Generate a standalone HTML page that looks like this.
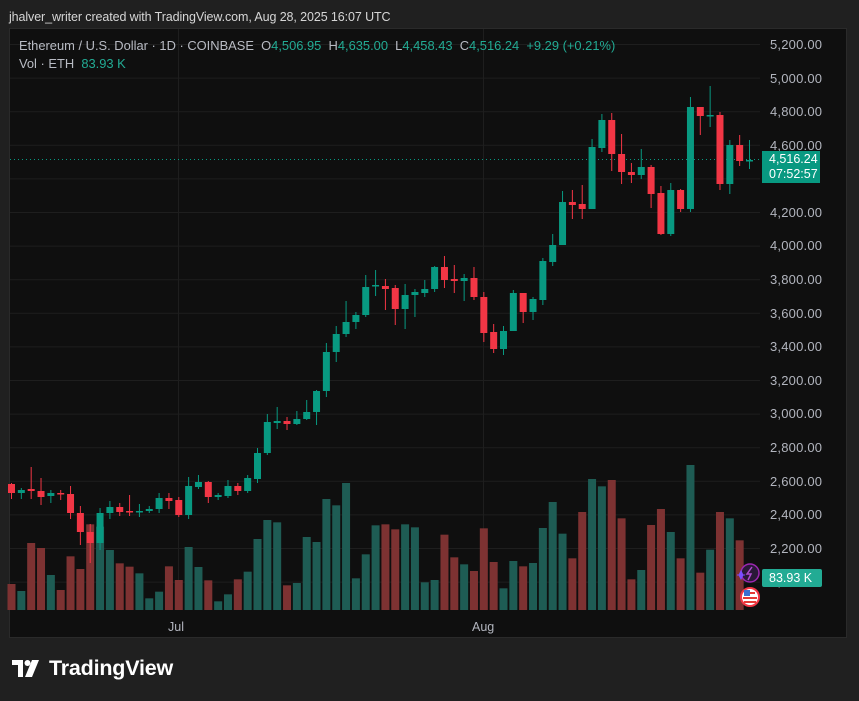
<!DOCTYPE html>
<html><head><meta charset="utf-8"><style>
html,body{margin:0;padding:0;background:#202020;width:859px;height:701px;overflow:hidden;font-family:"Liberation Sans",sans-serif}
#hdr{position:absolute;left:9px;top:10px;font-size:12.5px;color:#d6d6d6;letter-spacing:-0.1px}
#panel{position:absolute;left:9px;top:28px;width:838px;height:610px;background:#0f0f0f;border:1px solid #2a2a2a;box-sizing:border-box}
svg{position:absolute;left:0;top:0}
.leg{position:absolute;left:19px;font-size:12.9px;color:#b8bbc3;white-space:nowrap}
.leg b{font-weight:normal;color:#22ab94}
.pl{position:absolute;left:770px;font-size:13px;color:#b2b5be;letter-spacing:0.2px}
.tl{position:absolute;top:620px;font-size:12.5px;color:#b2b5be}
#badge{position:absolute;left:762px;top:151px;width:58px;height:32px;background:#089981;color:#fff;font-size:12.5px;line-height:15px;padding-left:7px;box-sizing:border-box;padding-top:1px}
#vb{position:absolute;left:762px;top:569px;width:60px;height:18px;background:#22ab94;color:#fff;font-size:12.5px;line-height:18px;padding-left:7px;box-sizing:border-box;border-radius:2px}
#logo{position:absolute;left:12px;top:656px;color:#fff;font-size:21.5px;font-weight:bold;letter-spacing:-0.2px}
</style></head><body>
<div id="hdr">jhalver_writer created with TradingView.com, Aug 28, 2025 16:07 UTC</div>
<div id="panel"></div>
<svg id="ch" width="859" height="701"></svg>
<div class="leg" style="top:38px">Ethereum / U.S. Dollar · 1D · COINBASE &nbsp;O<b>4,506.95</b> &nbsp;H<b>4,635.00</b> &nbsp;L<b>4,458.43</b> &nbsp;C<b>4,516.24</b> &nbsp;<b>+9.29 (+0.21%)</b></div>
<div class="leg" style="top:56px">Vol · ETH &nbsp;<b>83.93 K</b></div>
<div class="pl" style="top:37px">5,200.00</div>
<div class="pl" style="top:71px">5,000.00</div>
<div class="pl" style="top:104px">4,800.00</div>
<div class="pl" style="top:138px">4,600.00</div>
<div class="pl" style="top:205px">4,200.00</div>
<div class="pl" style="top:238px">4,000.00</div>
<div class="pl" style="top:272px">3,800.00</div>
<div class="pl" style="top:306px">3,600.00</div>
<div class="pl" style="top:339px">3,400.00</div>
<div class="pl" style="top:373px">3,200.00</div>
<div class="pl" style="top:406px">3,000.00</div>
<div class="pl" style="top:440px">2,800.00</div>
<div class="pl" style="top:474px">2,600.00</div>
<div class="pl" style="top:507px">2,400.00</div>
<div class="pl" style="top:541px">2,200.00</div>
<div class="pl" style="top:574px">2,000.00</div>
<div class="tl" style="left:168px">Jul</div>
<div class="tl" style="left:472px">Aug</div>
<div id="badge">4,516.24<br>07:52:57</div>
<div id="vb">83.93 K</div>
<svg width="859" height="701" style="pointer-events:none">
<circle cx="750" cy="573" r="9" fill="#2a1838" stroke="#9c27b0" stroke-width="1.5"/>
<path d="M752 567 L747 574 L751 574 L748 580" stroke="#b04bd0" stroke-width="1.5" fill="none"/>
<path d="M739 575 l2 -4 l2 4 l-2 4z M737 575 h8" fill="#7c4dff" stroke="#7c4dff" stroke-width="1"/>
<circle cx="750" cy="597" r="9" fill="#fff" stroke="#f23645" stroke-width="2"/>
<rect x="745" y="592" width="10" height="2" fill="#e53935"/><rect x="743" y="597" width="14" height="2" fill="#e53935"/><rect x="744" y="601" width="12" height="2" fill="#e53935"/>
<rect x="744" y="590" width="6" height="6" fill="#3b6fd1"/>
<g transform="translate(12,660)"><path d="M0 0 H11 V17 H6 V5 H0Z" fill="#fff"/><circle cx="15.5" cy="3" r="3" fill="#fff"/><path d="M20 0 H27 L20 17 H13Z" fill="#fff"/></g>
</svg>
<div id="logo" style="left:49px">TradingView</div>
<script>
var s=document.getElementById('ch'),h='';
var G='#089981',R='#f23645';
for(var k=0;k<17;k++){var y=44.5+k*33.6;h+='<line x1="10" x2="760" y1="'+y+'" y2="'+y+'" stroke="#1e1e1e"/>';}
h+='<line x1="178.5" x2="178.5" y1="29" y2="610" stroke="#1e1e1e"/><line x1="483.5" x2="483.5" y1="29" y2="610" stroke="#1e1e1e"/>';
h+='<line x1="10" x2="760" y1="159.5" y2="159.5" stroke="#089981" stroke-dasharray="1 3"/>';
var v=[['r',372],['g',393],['r',249],['r',264],['g',345],['r',390],['r',289],['r',327],['r',193],['g',200],['g',270],['r',310],['r',320],['g',340],['g',415],['g',395],['r',319],['r',360],['g',261],['g',321],['r',361],['g',424],['g',403],['r',358],['g',335],['g',237],['g',180],['g',187],['r',376],['g',369],['g',231],['g',246],['g',117],['g',136],['g',69],['g',355],['g',283],['g',196],['r',193],['r',208],['g',193],['g',202],['g',367],['g',360],['r',224],['r',292],['g',313],['r',333],['r',205],['r',306],['g',385],['g',303],['r',319],['g',309],['g',204],['g',126],['g',221],['r',295],['r',156],['g',57],['g',79],['r',60],['r',175],['r',358],['g',330],['r',195],['r',147],['g',216],['r',295],['g',15],['r',338],['g',269],['r',156],['g',175],['r',241]];
for(var i=0;i<v.length;i++){var x=11.5+i*9.84,t=460+v[i][1]/3;h+='<rect x="'+(x-4)+'" y="'+t+'" width="8" height="'+(610-t)+'" fill="'+(v[i][0]=='g'?'#1e5c54':'#7d3232')+'"/>';}
var c=[[484,493,483,499,'r'],[490,493,488,499,'g'],[489,491,467,499,'r'],[491,497,478,505,'r'],[493,496,490,503,'g'],[493,494,490,500,'r'],[494,513,486,519,'r'],[513,532,506,545,'r'],[532,543,524,563,'r'],[513,543,508,550,'g'],[507,513,501,519,'g'],[507,512,503,516,'r'],[511,512,495,516,'r'],[511,512,504,517,'g'],[509,511,506,513,'g'],[498,509,493,513,'g'],[498,501,493,509,'r'],[500,515,497,517,'r'],[486,515,477,519,'g'],[482,487,475,489,'g'],[482,497,481,503,'r'],[495,497,493,500,'g'],[486,496,480,498,'g'],[486,491,483,495,'r'],[478,491,475,493,'g'],[453,479,448,483,'g'],[422,453,414,455,'g'],[421,423,407,429,'g'],[421,424,417,430,'r'],[419,424,411,425,'g'],[412,419,400,420,'g'],[391,412,390,425,'g'],[352,391,343,397,'g'],[334,352,326,362,'g'],[322,334,301,337,'g'],[315,322,312,329,'g'],[287,315,275,317,'g'],[285,286,270,296,'g'],[286,289,279,310,'r'],[288,309,285,325,'r'],[295,309,284,329,'g'],[292,295,289,317,'g'],[289,293,280,297,'g'],[267,289,266,292,'g'],[267,280,256,288,'r'],[279,281,265,293,'r'],[278,281,274,301,'g'],[278,297,267,300,'r'],[297,333,292,342,'r'],[332,349,324,353,'r'],[331,349,326,355,'g'],[293,331,290,331,'g'],[293,312,293,323,'r'],[299,312,297,320,'g'],[261,300,258,305,'g'],[245,262,234,266,'g'],[202,245,191,245,'g'],[202,205,190,219,'r'],[204,209,185,219,'r'],[147,209,139,209,'g'],[120,148,114,152,'g'],[120,154,113,171,'r'],[154,172,134,184,'r'],[172,175,163,183,'r'],[167,175,149,179,'g'],[167,194,165,208,'r'],[193,234,186,235,'r'],[190,234,183,236,'g'],[190,209,189,212,'r'],[107,209,97,212,'g'],[107,116,107,135,'r'],[115,116,86,127,'g'],[115,184,112,190,'r'],[145,184,140,194,'g'],[145,161,135,166,'r'],[160,161,140,169,'g']];
for(var i=0;i<c.length;i++){var x=11.5+i*9.84,d=c[i],col=d[4]=='g'?G:R;var bh=Math.max(d[1]-d[0],1.5);
h+='<line x1="'+x+'" x2="'+x+'" y1="'+d[2]+'" y2="'+d[3]+'" stroke="'+col+'" stroke-width="1"/>';
h+='<rect x="'+(x-3.5)+'" y="'+d[0]+'" width="7" height="'+bh+'" fill="'+col+'"/>';}
s.innerHTML=h;
</script>
</body></html>
